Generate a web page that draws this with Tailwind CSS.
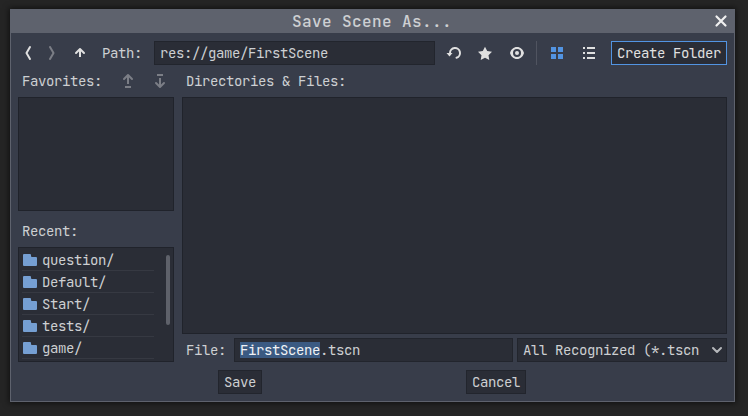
<!DOCTYPE html>
<html lang="en">
<head>
<meta charset="utf-8">
<title>Save Scene As...</title>
<script src="https://cdn.jsdelivr.net/npm/@tailwindcss/browser@4"></script>
</head>
<body class="w-[748px] h-[416px] overflow-hidden bg-[#252525] pl-[10px] pt-[9px] font-['JetBrains_Mono','DejaVu_Sans_Mono',monospace] text-[14px] leading-[24px] tracking-[-0.4px] text-[#cdcfd2] whitespace-nowrap">
<main class="w-[725px] h-[393px] flex flex-col bg-[#383d4a] border border-t-0 border-[#5e626d] shadow-[0_0_6px_1px_rgba(0,0,0,0.6)]">
  <header class="h-6 shrink-0 bg-[#5e626d] flex items-center relative">
    <h1 class="w-full pl-[281px] pt-px text-[16px] font-medium tracking-[0.4px]">Save Scene As...</h1>
    <svg class="absolute right-[5px] top-1 size-4" viewBox="0 0 16 16" fill="none" stroke="#f0f0f0" stroke-width="2.200" stroke-linecap="round"><path d="M3.500 3.500l9 9M12.500 3.500l-9 9"/></svg>
  </header>
  <div class="flex-1 flex flex-col px-[7px] pt-2">
    <div class="flex items-center h-6 text-[#e0e0e0]">
      <svg class="size-4 ml-0.5" viewBox="0 0 16 16" fill="none" stroke="currentColor" stroke-width="2" stroke-linecap="round" stroke-linejoin="round"><path d="M10 2L6.500 8l3.500 6"/></svg>
      <svg class="size-4 ml-2 opacity-40" viewBox="0 0 16 16" fill="none" stroke="currentColor" stroke-width="2" stroke-linecap="round" stroke-linejoin="round"><path d="M6 2l3.500 6L6 14"/></svg>
      <svg class="size-4 ml-3" viewBox="0 0 16 16" fill="none" stroke="currentColor" stroke-width="2" stroke-linecap="round" stroke-linejoin="round"><path d="M4 8l4-4 4 4"/><path d="M8 5v7" stroke-linecap="butt"/></svg>
      <label class="ml-[14px] w-[52px] text-[#cdcfd2]">Path:</label>
      <div class="w-[281px] h-6 bg-[#2a2d36] border border-[#22252d] pl-[5px] leading-[22px] text-[#cdcfd2]">res://game/FirstScene</div>
      <svg class="size-4 ml-[11px]" viewBox="0 0 16 16" fill="none" stroke="currentColor" stroke-width="2"><path d="M4 8.500V8a5 5 0 1 1 6.500 4.800" stroke-linecap="round"/><path d="M0.500 8h6l-3 3.500z" fill="currentColor" stroke="none"/></svg>
      <svg class="size-4 ml-[15px]" viewBox="0 0 16 16" fill="currentColor"><path d="M8 1.700l2.200 4.400 4.800.7-3.500 3.400.8 4.800L8 12.700 3.700 15l.8-4.800L1 6.800l4.800-.7z"/></svg>
      <svg class="size-4 ml-4" viewBox="0 0 16 16" fill="currentColor"><path fill-rule="evenodd" d="M8 2C4.500 2 2 4.500 1 8c1 3.500 3.500 6 7 6s6-2.500 7-6c-1-3.500-3.500-6-7-6zM8 4a4 4 0 1 1 0 8 4 4 0 0 1 0-8z"/><circle cx="8" cy="8" r="2"/></svg>
      <span class="ml-[11px] w-px h-6 bg-[#505460]"></span>
      <svg class="size-4 ml-3" viewBox="0 0 16 16" fill="#5294e2"><path d="M2 2h5v5H2zM9 2h5v5H9zM2 9h5v5H2zM9 9h5v5H9z"/></svg>
      <svg class="size-4 ml-4" viewBox="0 0 16 16" fill="currentColor"><path d="M2 2h2v2H2zM6 2h8v2H6zM2 7h2v2H2zM6 7h8v2H6zM2 12h2v2H2zM6 12h8v2H6z"/></svg>
      <button class="ml-[14px] w-[116px] h-6 bg-[#2a2d36] border border-[#5294e2] pl-[5px] text-left leading-[22px] text-[#e0e0e0]">Create Folder</button>
    </div>
    <div class="mt-1 flex gap-2">
      <aside class="w-[156px] flex flex-col">
        <div class="h-7 flex items-center pl-1 pb-1">
          <span class="w-[98px]">Favorites:</span>
          <svg class="size-4 text-[#7b7e86]" viewBox="0 0 16 16" fill="none" stroke="currentColor" stroke-width="2"><path d="M4 6l4-4 4 4" stroke-linecap="round" stroke-linejoin="round"/><path d="M8 3v8M5 14h6"/></svg>
          <svg class="size-4 ml-4 text-[#7b7e86]" viewBox="0 0 16 16" fill="none" stroke="currentColor" stroke-width="2"><path d="M4 10l4 4 4-4" stroke-linecap="round" stroke-linejoin="round"/><path d="M8 13V5M5 2h6"/></svg>
        </div>
        <div class="h-[114px] bg-[#2a2d36] border border-[#20232b]"></div>
        <div class="h-9 pl-1 pt-2">Recent:</div>
        <div class="h-[115px] bg-[#2a2d36] border border-[#20232b] flex pl-[3px] pt-px overflow-hidden">
          <ul class="w-[132px] leading-[22px]">
            <li class="flex h-[22px] items-center border-b border-[#363942]"><svg class="w-[14px] h-3 ml-px mr-[5px] shrink-0" viewBox="0 0 14 12" fill="#759fd3"><path d="M1 0h6a1 1 0 0 1 1 1v1a1 1 0 0 0 1 1h4a1 1 0 0 1 1 1v7a1 1 0 0 1-1 1H1a1 1 0 0 1-1-1V1a1 1 0 0 1 1-1z"/></svg>question/</li>
            <li class="flex h-[22px] items-center border-b border-[#363942]"><svg class="w-[14px] h-3 ml-px mr-[5px] shrink-0" viewBox="0 0 14 12" fill="#759fd3"><path d="M1 0h6a1 1 0 0 1 1 1v1a1 1 0 0 0 1 1h4a1 1 0 0 1 1 1v7a1 1 0 0 1-1 1H1a1 1 0 0 1-1-1V1a1 1 0 0 1 1-1z"/></svg>Default/</li>
            <li class="flex h-[22px] items-center border-b border-[#363942]"><svg class="w-[14px] h-3 ml-px mr-[5px] shrink-0" viewBox="0 0 14 12" fill="#759fd3"><path d="M1 0h6a1 1 0 0 1 1 1v1a1 1 0 0 0 1 1h4a1 1 0 0 1 1 1v7a1 1 0 0 1-1 1H1a1 1 0 0 1-1-1V1a1 1 0 0 1 1-1z"/></svg>Start/</li>
            <li class="flex h-[22px] items-center border-b border-[#363942]"><svg class="w-[14px] h-3 ml-px mr-[5px] shrink-0" viewBox="0 0 14 12" fill="#759fd3"><path d="M1 0h6a1 1 0 0 1 1 1v1a1 1 0 0 0 1 1h4a1 1 0 0 1 1 1v7a1 1 0 0 1-1 1H1a1 1 0 0 1-1-1V1a1 1 0 0 1 1-1z"/></svg>tests/</li>
            <li class="flex h-[22px] items-center border-b border-[#363942]"><svg class="w-[14px] h-3 ml-px mr-[5px] shrink-0" viewBox="0 0 14 12" fill="#759fd3"><path d="M1 0h6a1 1 0 0 1 1 1v1a1 1 0 0 0 1 1h4a1 1 0 0 1 1 1v7a1 1 0 0 1-1 1H1a1 1 0 0 1-1-1V1a1 1 0 0 1 1-1z"/></svg>game/</li>
          </ul>
          <span class="ml-3 mt-1.5 w-1 h-[70px] rounded-full bg-[#5e616a]"></span>
        </div>
      </aside>
      <section class="w-[545px] flex flex-col">
        <div class="h-7 pl-1">Directories &amp; Files:</div>
        <div class="h-[237px] bg-[#2a2d36] border border-[#20232b]"></div>
        <div class="mt-1 h-6 flex">
          <label class="pl-1 w-[52px]">File:</label>
          <div class="w-[279px] h-6 bg-[#2a2d36] border border-[#22252d] pl-[5px] flex items-center leading-[22px]"><span class="w-20 h-4 leading-[16px] bg-[#3b5a82] text-[#f0f2f5]">FirstScene</span><span>.tscn</span></div>
          <div class="ml-1 w-[210px] h-6 bg-[#2a2d36] border border-[#22252d] pl-[5px] pr-px flex items-center justify-between leading-[22px]"><span>All Recognized (*.tscn</span><svg class="size-4" viewBox="0 0 16 16" fill="none" stroke="#b5b7bb" stroke-width="2" stroke-linecap="round" stroke-linejoin="round"><path d="M4 6l4 4 4-4"/></svg></div>
        </div>
      </section>
    </div>
    <footer class="mt-2 pl-[200px] flex">
      <button class="w-11 h-6 bg-[#2a2d36] border border-[#22252d] leading-[22px] pl-[5px] text-left">Save</button>
      <button class="ml-[204px] w-[60px] h-6 bg-[#2a2d36] border border-[#22252d] leading-[22px] pl-[5px] text-left">Cancel</button>
    </footer>
  </div>
</main>
</body>
</html>
